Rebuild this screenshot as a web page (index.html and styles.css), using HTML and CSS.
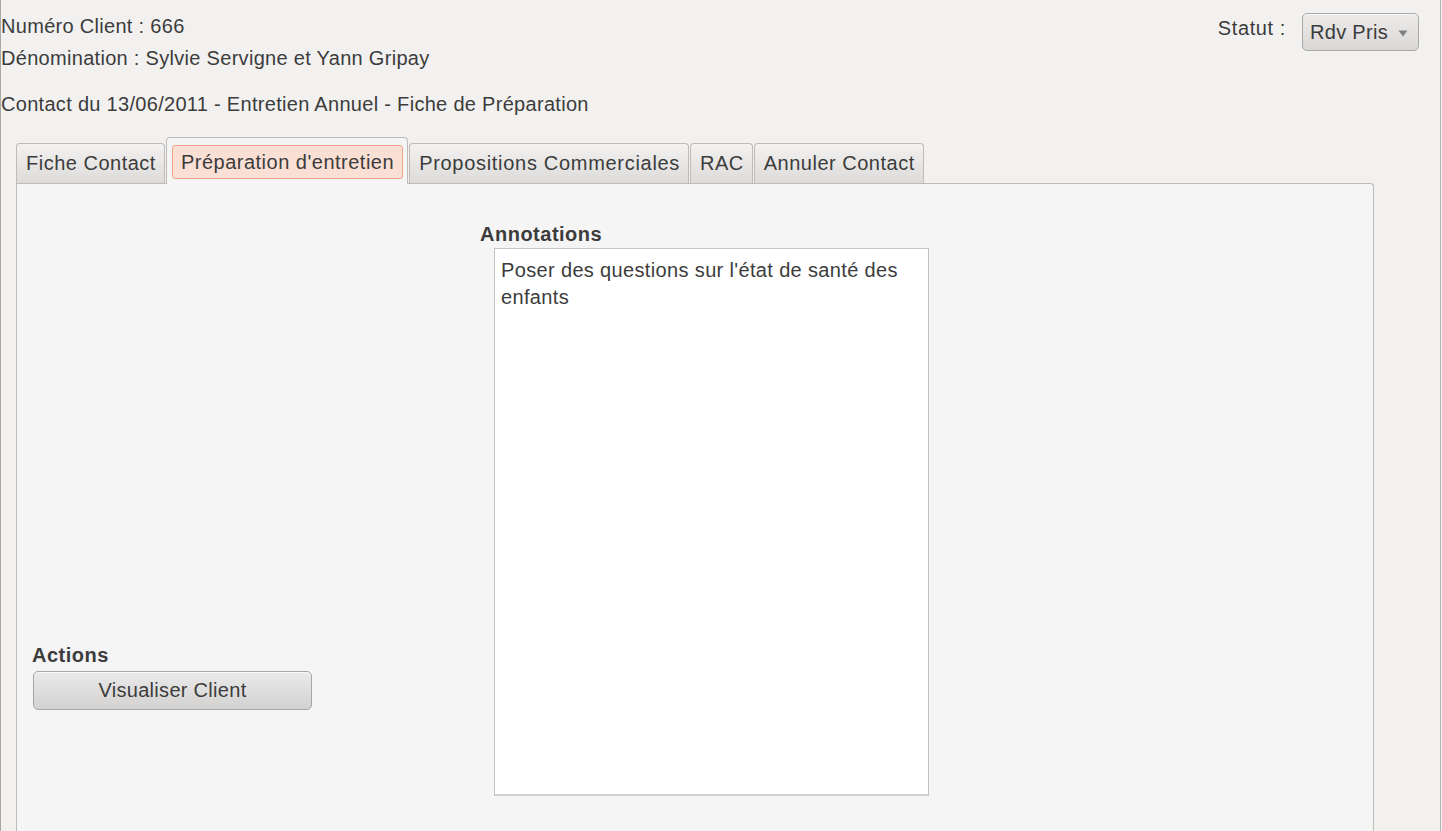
FILE: index.html
```html
<!DOCTYPE html>
<html lang="fr">
<head>
<meta charset="utf-8">
<title>Fiche de Préparation</title>
<link rel="stylesheet" href="styles.css">
</head>
<body>
<div class="window">
  <header class="head">
    <div class="info">
      <div class="line">Numéro Client : 666</div>
      <div class="line">Dénomination : Sylvie Servigne et Yann Gripay</div>
      <div class="line contact">Contact du 13/06/2011 - Entretien Annuel - Fiche de Préparation</div>
    </div>
    <div class="status">
      <span class="status-label">Statut :</span>
      <div class="combo">
        <span>Rdv Pris</span>
        <svg class="arrow" width="10" height="7" viewBox="0 0 10 7"><path d="M0.5 0.5 L9.5 0.5 L5 6.5 Z" fill="#808080"/></svg>
      </div>
    </div>
  </header>

  <div class="notebook">
    <div class="tabs">
      <div class="tab">Fiche Contact</div>
      <div class="tab active"><span class="focus">Préparation d'entretien</span></div>
      <div class="tab wide">Propositions Commerciales</div>
      <div class="tab">RAC</div>
      <div class="tab">Annuler Contact</div>
    </div>
    <div class="panel">
      <div class="left-col">
        <div class="group-title">Actions</div>
        <button class="btn">Visualiser Client</button>
      </div>
      <div class="mid-col">
        <div class="group-title">Annotations</div>
        <div class="textarea">Poser des questions sur l'état de santé des enfants</div>
      </div>
    </div>
  </div>
</div>
</body>
</html>
```

FILE: styles.css
```css
html, body {
  margin: 0;
  padding: 0;
}
body {
  width: 1442px;
  height: 831px;
  overflow: hidden;
  background: #f2f1f0;
  font-family: "Liberation Sans", Arial, sans-serif;
  font-size: 20px;
  letter-spacing: 0.3px;
  color: #3c3c3c;
}
.window {
  box-sizing: border-box;
  width: 1441px;
  height: 831px;
  border-left: 1px solid #a8a8a8;
  border-right: 1px solid #b4b4b4;
  display: flex;
  flex-direction: column;
}
.head {
  display: flex;
  justify-content: space-between;
  align-items: flex-start;
  padding-top: 12px;
}
.line {
  height: 32px;
  line-height: 28px;
}
.line.contact {
  margin-top: 14px;
  height: 28px;
}
.status {
  display: flex;
  align-items: center;
  gap: 16px;
  padding-top: 1px;
  margin-right: 21px;
}
.status-label {
  line-height: 28px;
  margin-top: -8px;
  letter-spacing: 0.6px;
}
.combo {
  box-sizing: border-box;
  width: 117px;
  height: 38px;
  border: 1px solid #a9a9a9;
  border-radius: 5px;
  background: linear-gradient(#ecebea, #d9d8d7);
  display: flex;
  align-items: center;
  justify-content: space-between;
  padding: 0 10px 0 7px;
  box-shadow: inset 0 1px 0 #f7f7f7;
}
.arrow {
  margin-top: 3px;
}
.notebook {
  margin-top: 19px;
  margin-left: 15px;
  width: 1358px;
  flex: 1;
  display: flex;
  flex-direction: column;
}
.tabs {
  display: flex;
  align-items: flex-end;
  height: 46px;
  position: relative;
  z-index: 1;
}
.tab {
  box-sizing: border-box;
  height: 40px;
  padding: 0 8px 0 9px;
  line-height: 38px;
  letter-spacing: 0.5px;
  border: 1px solid #bdbcbb;
  border-bottom: none;
  border-radius: 4px 4px 0 0;
  background: linear-gradient(#f3f2f1, #dcdbda);
  margin-right: 1px;
  white-space: nowrap;
}
.tab.wide {
  letter-spacing: 0.7px;
}
.tab.active {
  background: #f5f5f5;
  padding: 7px 4px 0 5px;
  line-height: 32px;
  margin-bottom: -1px;
  height: 47px;
}
.focus {
  display: block;
  box-sizing: border-box;
  height: 34px;
  padding: 0 8px;
  border: 1px solid #f0a486;
  border-radius: 3px;
  background: #f9dfd4;
}
.panel {
  flex: 1;
  box-sizing: border-box;
  border: 1px solid #bdbcbb;
  border-bottom: none;
  border-radius: 0 4px 0 0;
  background: #f5f5f5;
  display: flex;
  padding: 38px 0 0 15px;
}
.left-col {
  width: 448px;
  display: flex;
  flex-direction: column;
  justify-content: flex-end;
  padding-bottom: 121px;
}
.group-title {
  font-weight: bold;
  line-height: 24px;
  height: 24px;
  letter-spacing: 0.5px;
}
.mid-col {
  display: flex;
  flex-direction: column;
}
.btn {
  box-sizing: border-box;
  margin: 4px 0 0 1px;
  width: 279px;
  height: 39px;
  border: 1px solid #a6a6a6;
  border-radius: 5px;
  background: linear-gradient(#ebeaea, #d3d2d1);
  font-family: inherit;
  font-size: 20px;
  letter-spacing: 0.3px;
  color: #3c3c3c;
  box-shadow: inset 0 1px 0 #f8f8f8;
}
.textarea {
  box-sizing: border-box;
  margin: 2px 0 0 14px;
  width: 435px;
  height: 548px;
  background: #fff;
  border: 1px solid #c3c3c3;
  border-bottom: 2px solid #cfcfcf;
  padding: 8px 20px 0 6px;
  line-height: 27px;
  letter-spacing: 0.35px;
}
```
